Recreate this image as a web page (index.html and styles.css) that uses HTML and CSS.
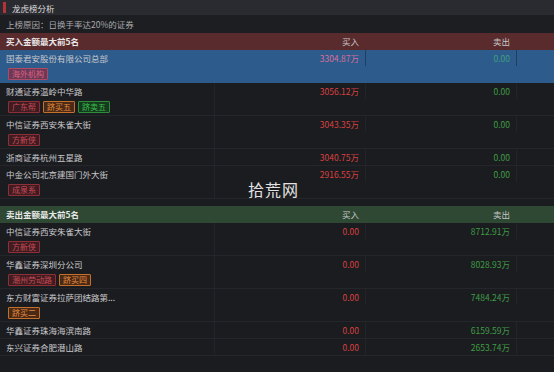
FILE: index.html
```html
<!DOCTYPE html>
<html lang="zh">
<head>
<meta charset="utf-8">
<link rel="stylesheet" href="styles.css">
</head>
<body>
<div class="page">
  <div class="title"><span class="mark"></span>龙虎榜分析</div>
  <div class="reason">上榜原因：日换手率达20%的证券</div>

  <div class="row head buy-head">
    <div class="c name">买入金额最大前5名</div>
    <div class="c num">买入</div>
    <div class="c num">卖出</div>
    <div class="c"></div>
  </div>
  <div class="row selected">
    <div class="c name"><div class="nm">国泰君安股份有限公司总部</div><div class="tags"><span class="tag red">海外机构</span></div></div>
    <div class="c num pink">3304.87万</div>
    <div class="c num sgreen">0.00</div>
    <div class="c"></div>
  </div>
  <div class="row">
    <div class="c name"><div class="nm">财通证券温岭中华路</div><div class="tags"><span class="tag red">广东帮</span><span class="tag orange">跻买五</span><span class="tag green">跻卖五</span></div></div>
    <div class="c num up">3056.12万</div>
    <div class="c num down">0.00</div>
    <div class="c"></div>
  </div>
  <div class="row">
    <div class="c name"><div class="nm">中信证券西安朱雀大街</div><div class="tags"><span class="tag red">方新侠</span></div></div>
    <div class="c num up">3043.35万</div>
    <div class="c num down">0.00</div>
    <div class="c"></div>
  </div>
  <div class="row">
    <div class="c name"><div class="nm">浙商证券杭州五星路</div></div>
    <div class="c num up">3040.75万</div>
    <div class="c num down">0.00</div>
    <div class="c"></div>
  </div>
  <div class="row">
    <div class="c name"><div class="nm">中金公司北京建国门外大街</div><div class="tags"><span class="tag red">成泉系</span></div></div>
    <div class="c num up">2916.55万</div>
    <div class="c num down">0.00</div>
    <div class="c"></div>
  </div>

  <div class="row head sell-head">
    <div class="c name">卖出金额最大前5名</div>
    <div class="c num">买入</div>
    <div class="c num">卖出</div>
    <div class="c"></div>
  </div>
  <div class="row">
    <div class="c name"><div class="nm">中信证券西安朱雀大街</div><div class="tags"><span class="tag red">方新侠</span></div></div>
    <div class="c num up">0.00</div>
    <div class="c num down">8712.91万</div>
    <div class="c"></div>
  </div>
  <div class="row">
    <div class="c name"><div class="nm">华鑫证券深圳分公司</div><div class="tags"><span class="tag red">潮州劳动路</span><span class="tag orange">跻买四</span></div></div>
    <div class="c num up">0.00</div>
    <div class="c num down">8028.93万</div>
    <div class="c"></div>
  </div>
  <div class="row">
    <div class="c name"><div class="nm">东方财富证券拉萨团结路第...</div><div class="tags"><span class="tag orange">跻买二</span></div></div>
    <div class="c num up">0.00</div>
    <div class="c num down">7484.24万</div>
    <div class="c"></div>
  </div>
  <div class="row">
    <div class="c name"><div class="nm">华鑫证券珠海海滨南路</div></div>
    <div class="c num up">0.00</div>
    <div class="c num down">6159.59万</div>
    <div class="c"></div>
  </div>
  <div class="row">
    <div class="c name"><div class="nm">东兴证券合肥潜山路</div></div>
    <div class="c num up">0.00</div>
    <div class="c num down">2653.74万</div>
    <div class="c"></div>
  </div>

  <div class="watermark">拾荒网</div>
</div>
</body>
</html>
```

FILE: styles.css
```css
html, body {
  margin: 0;
  padding: 0;
  background: #1b1c20;
}
body {
  width: 554px;
  height: 372px;
  overflow: hidden;
  font-family: "Noto Sans CJK SC", "Noto Sans", sans-serif;
  font-size: 8.5px;
  color: #c9c9cb;
}
.page {
  position: relative;
  display: flex;
  flex-direction: column;
}
.title {
  height: 15px;
  background: #2a2b30;
  display: flex;
  align-items: center;
  color: #dcdcdc;
  padding-left: 3px;
  gap: 6px;
}
.mark {
  width: 3px;
  height: 11px;
  background: #b5323a;
}
.reason {
  height: 18px;
  line-height: 18px;
  padding-left: 6px;
  color: #a9a9ab;
  background: #1d1e22;
}
.row {
  display: grid;
  grid-template-columns: 215px 151px 151px 1fr;
  border-bottom: 1px solid #25262b;
}
.c {
  border-right: 1px solid #23242a;
}
.c:last-child { border-right: none; }
.name { padding-left: 6px; }
.nm {
  height: 16px;
  line-height: 16px;
  white-space: nowrap;
}
.num {
  height: 16px;
  line-height: 16px;
  text-align: right;
  padding-right: 6px;
}
.head {
  height: 17px;
  font-weight: bold;
  border-bottom: none;
}
.head .c { line-height: 17px; height: 17px; }
.head .num { font-weight: normal; color: #c7c7c7; }
.head .c { border-right-color: transparent; }
.buy-head { background: #5a2b2d; color: #e8e8e8; }
.sell-head { background: #2e4833; color: #e8e8e8; margin-top: 7px; }
.selected { background: #2d5b8c; border-bottom-color: #2d5b8c; }
.selected .c { border-right-color: #203f63; }
.selected .c:first-child { border-right-color: #2d5b8c; }
.up { color: #d9413f; }
.down { color: #3f9c44; }
.pink { color: #d5709a; }
.sgreen { color: #3fa07a; }
.tags {
  height: 16px;
  display: flex;
  align-items: center;
  gap: 3px;
  padding-left: 2px;
}
.tag {
  font-size: 8px;
  line-height: 10px;
  padding: 0 3px;
  border: 1px solid;
  border-radius: 1px;
}
.tag.red { color: #c84a55; border-color: #8c2f36; background: #3e1c21; }
.selected .tag.red { color: #e0607a; border-color: #b04a62; background: #6a3a5a; }
.tag.orange { color: #e58a3c; border-color: #c4702d; background: #4a2a16; }
.tag.green { color: #3bbf4c; border-color: #2c8a38; background: #163a1d; }
.watermark {
  position: absolute;
  left: 248px;
  top: 177px;
  font-size: 16px;
  color: #e2e2e2;
  letter-spacing: 1px;
}
```
